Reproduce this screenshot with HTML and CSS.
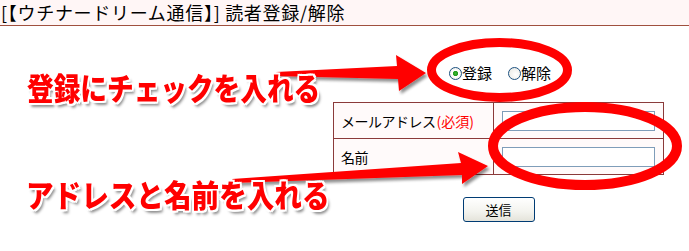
FILE: index.html
```html
<!DOCTYPE html>
<html lang="ja">
<head>
<meta charset="utf-8">
<link rel="stylesheet" href="styles.css">
</head>
<body>
<div class="page">
  <div class="header">[【ウチナードリーム通信】] 読者登録/解除</div>
  <form class="form">
    <div class="radios">
      <label class="opt"><input type="radio" name="mode" checked><span>登録</span></label>
      <label class="opt"><input type="radio" name="mode"><span>解除</span></label>
    </div>
    <table class="fields">
      <tr>
        <td class="lbl">メールアドレス<span class="req">(必須)</span></td>
        <td class="val"><input type="text" class="txt"></td>
      </tr>
      <tr>
        <td class="lbl">名前</td>
        <td class="val"><input type="text" class="txt"></td>
      </tr>
    </table>
    <div class="actions"><button type="button" class="btn">送信</button></div>
  </form>

  <svg class="marks" width="689" height="251" viewBox="0 0 689 251">
    <defs>
      <filter id="sh" x="-10%" y="-30%" width="130%" height="180%">
        <feGaussianBlur in="SourceAlpha" stdDeviation="1.5"/>
        <feOffset dx="2" dy="3" result="b"/>
        <feComponentTransfer><feFuncA type="linear" slope="0.45"/></feComponentTransfer>
        <feMerge><feMergeNode/><feMergeNode in="SourceGraphic"/></feMerge>
      </filter>
    </defs>
    <polygon filter="url(#sh)" fill="#ff0000" points="276,72 397,66 396,55 426,73 399,91 398,79 276,76"/>
    <polygon filter="url(#sh)" fill="#ff0000" points="232,179 461,163 458,152 488,166 462,184 462,175 232,183"/>
    <ellipse cx="499.5" cy="70" rx="68" ry="27.5" fill="none" stroke="#ff0000" stroke-width="9"/>
    <ellipse cx="585" cy="146" rx="92" ry="39" fill="none" stroke="#ff0000" stroke-width="10"/>
  </svg>

  <div class="note note1">登録にチェックを入れる</div>
  <div class="note note2">アドレスと名前を入れる</div>
</div>
</body>
</html>
```

FILE: styles.css
```css
html, body {
  margin: 0;
  padding: 0;
  background: #ffffff;
}

.page {
  position: relative;
  width: 689px;
  height: 251px;
  overflow: hidden;
  font-family: "Noto Sans CJK JP", "Noto Sans", sans-serif;
  color: #000;
}

.header {
  height: 25px;
  line-height: 25px;
  padding-left: 1px;
  font-size: 18px;
  letter-spacing: 0.7px;
  background: #fff6f6;
  border-bottom: 1px solid #a0503e;
  white-space: nowrap;
}

.form {
  margin: 0 0 0 333px;
  width: 331px;
  display: flex;
  flex-direction: column;
}

.radios {
  display: flex;
  justify-content: center;
  gap: 16px;
  height: 20px;
  margin-top: 37px;
  padding-left: 3px;
  align-items: center;
}

.opt {
  display: flex;
  align-items: center;
  font-size: 15px;
  line-height: 20px;
}

.opt input {
  appearance: none;
  -webkit-appearance: none;
  width: 13px;
  height: 13px;
  margin: 0;
  border-radius: 50%;
  border: 1px solid #1c5180;
  background: radial-gradient(circle at 60% 60%, #ffffff 0%, #e6e6e0 100%);
  box-sizing: border-box;
  position: relative;
}

.opt input:checked {
  background: radial-gradient(circle, #3bb832 0, #1f9a1a 2.2px, #ffffff 3px, #e6e6e0 100%);
}

.fields {
  margin-top: 19px;
  border-collapse: collapse;
  width: 331px;
  background: #fffafa;
}

.fields td {
  border: 1px solid #8b3a3a;
  height: 36px;
  padding: 0;
  box-sizing: border-box;
}

.lbl {
  width: 160px;
  padding-left: 7px !important;
  font-size: 14px;
  white-space: nowrap;
  letter-spacing: -0.5px;
}

.req {
  color: #ff0000;
  letter-spacing: 0;
  margin-left: 1px;
}

.val {
  padding-left: 8px !important;
}

.txt {
  display: block;
  width: 153px;
  height: 20px;
  margin: 0;
  border: 1px solid #7f9db9;
  background: #fff;
  box-sizing: border-box;
  padding: 0 2px;
}

.actions {
  display: flex;
  justify-content: center;
  margin-top: 22px;
}

.btn {
  width: 72px;
  height: 25px;
  border: 1px solid #003c74;
  border-radius: 3px;
  background: linear-gradient(#ffffff, #f3f3ee 60%, #e4e3da);
  font-family: "Noto Sans CJK JP", sans-serif;
  font-size: 13px;
  padding: 0;
  color: #000;
}

.marks {
  position: absolute;
  left: 0;
  top: 0;
  pointer-events: none;
}

.note {
  position: absolute;
  font-weight: 900;
  font-size: 31px;
  line-height: 1;
  color: #ff0000;
  white-space: nowrap;
  transform-origin: left top;
  text-shadow:
    2px 0 0 #fff, -2px 0 0 #fff, 0 2px 0 #fff, 0 -2px 0 #fff,
    2px 2px 0 #fff, -2px -2px 0 #fff, 2px -2px 0 #fff, -2px 2px 0 #fff,
    3px 4px 3px rgba(0, 0, 0, 0.45);
}

.note1 {
  left: 27px;
  top: 71px;
  transform: scaleX(0.86);
}

.note2 {
  left: 26px;
  top: 178px;
  transform: scaleX(0.89);
}
```
